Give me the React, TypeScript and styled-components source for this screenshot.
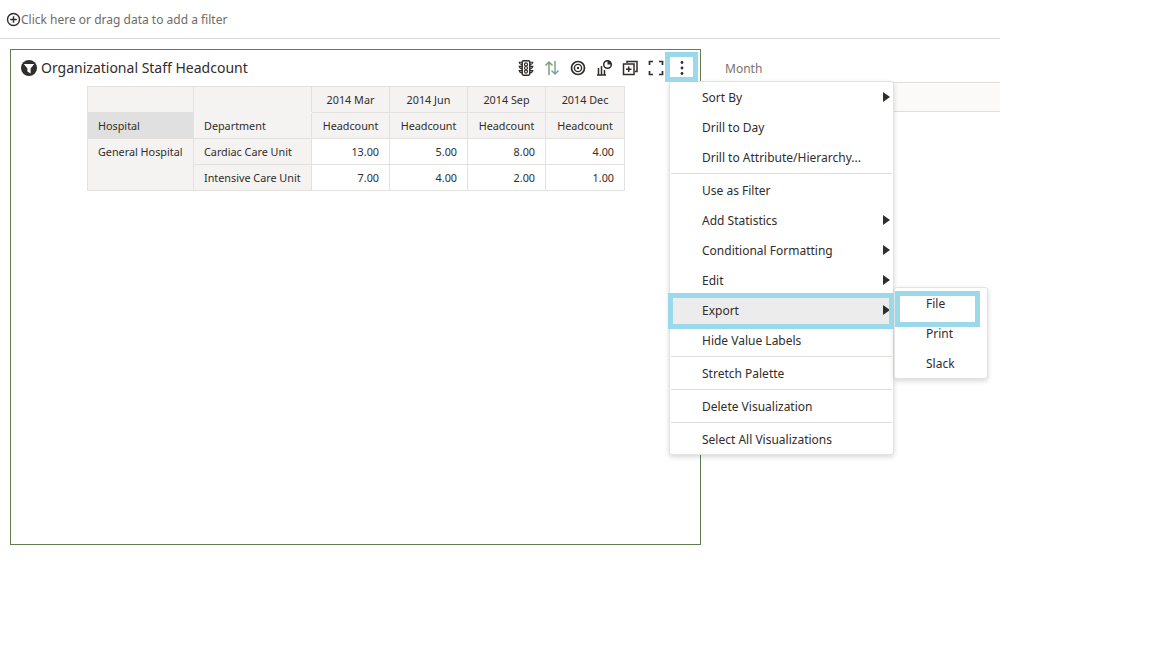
import React from 'react';
import styled, { createGlobalStyle } from 'styled-components';

const Global = createGlobalStyle`
  html, body { margin: 0; padding: 0; background: #fff; }
  body { font-family: "Noto Sans", "Open Sans", sans-serif; color: #312d2a; }
`;
const Page = styled.div`
  position: relative;
  width: 1152px;
  height: 648px;
  overflow: hidden;
`;
const Canvas = styled.div`
  width: 1000px;
`;
const FilterBar = styled.div`
  height: 38px;
  border-bottom: 1px solid #d6d5d1;
  display: flex;
  align-items: center;
  padding-left: 6px;
  font-size: 12px;
  color: #6f6b66;
`;
const Body = styled.div`
  display: flex;
  padding: 10px 0 0 10px;
`;
const Viz = styled.section`
  width: 691px;
  height: 496px;
  box-sizing: border-box;
  border: 1px solid #5f7d4f;
  flex: none;
`;
const VizHeader = styled.header`
  height: 36px;
  display: flex;
  align-items: center;
  padding-left: 10px;
  box-sizing: border-box;
`;
const Title = styled.h2`
  margin: -2px 0 0 4px;
  font-size: 14px;
  font-weight: 400;
  flex: 1;
`;
const Tools = styled.div`
  display: flex;
  padding-right: 5px;
`;
const Tool = styled.span`
  width: 26px;
  height: 26px;
  display: flex;
  align-items: center;
  justify-content: center;
`;
const Grid = styled.table`
  margin-left: 76px;
  border-collapse: collapse;
  table-layout: fixed;
  width: 537px;
  font-size: 10.8px;
  line-height: 24px;
  td, th { border: 1px solid #e2e1de; font-weight: 400; padding: 0 10px; height: 26px; box-sizing: border-box; white-space: nowrap; }
`;
const Head = styled.th<{ $active?: boolean; $left?: boolean; $open?: boolean }>`
  background: ${p => (p.$active ? '#dfe0df' : '#f4f3f2')};
  text-align: ${p => (p.$left ? 'left' : 'center')};
  && { border-bottom-color: ${p => (p.$open ? '#f4f3f2' : '#e2e1de')}; }
`;
const RowHead = styled.td<{ $top?: boolean }>`
  background: #f4f3f2;
  vertical-align: ${p => (p.$top ? 'top' : 'middle')};
  && { padding-top: ${p => (p.$top ? '1px' : '0')}; }
`;
const Value = styled.td`
  text-align: right;
`;
const Side = styled.aside`
  flex: 1;
`;
const SideLabel = styled.div`
  height: 33px;
  padding-left: 24px;
  display: flex;
  align-items: flex-end;
  padding-bottom: 5px;
  box-sizing: border-box;
  font-size: 12px;
  color: #7a736e;
`;
const SideBand = styled.div`
  height: 30px;
  box-sizing: border-box;
  background: #fbfaf9;
  border-top: 1px solid #dfdedb;
  border-bottom: 1px solid #dfdedb;
`;
const Menu = styled.div<{ $x: number; $y: number; $w: number; $h: number }>`
  position: absolute;
  left: ${p => p.$x}px;
  top: ${p => p.$y}px;
  width: ${p => p.$w}px;
  height: ${p => p.$h}px;
  box-sizing: border-box;
  background: #fff;
  border: 1px solid #e4e3e1;
  border-radius: 3px;
  box-shadow: 0 2px 5px rgba(0,0,0,.16);
`;
const Item = styled.div<{ $hover?: boolean }>`
  height: 30px;
  display: flex;
  align-items: center;
  justify-content: space-between;
  padding: 0 3px 0 32px;
  font-size: 12px;
  background: ${p => (p.$hover ? '#ececec' : 'transparent')};
`;
const SubItem = styled.div`
  height: 30px;
  display: flex;
  align-items: center;
  padding-left: 31px;
  font-size: 12px;
`;
const Sep = styled.div`
  height: 1px;
  margin: 1px 1px;
  background: #dfdedb;
`;
const Arrow = styled.span`
  width: 0;
  height: 0;
  border-left: 7px solid #312d2a;
  border-top: 5.5px solid transparent;
  border-bottom: 5.5px solid transparent;
`;
const Highlight = styled.div<{ $x: number; $y: number; $w: number; $h: number }>`
  position: absolute;
  left: ${p => p.$x}px;
  top: ${p => p.$y}px;
  width: ${p => p.$w}px;
  height: ${p => p.$h}px;
  box-sizing: border-box;
  border: 5px solid #9bd8ea;
  pointer-events: none;
`;

const I = ({ children, c = '#312d2a' }: { children: React.ReactNode; c?: string }) => (
  <svg width="18" height="18" viewBox="0 0 18 18" fill="none" stroke={c} strokeWidth="1.5">{children}</svg>
);

const icons = [
  <I key="a"><rect x="5.2" y="1.8" width="7.6" height="14.4" rx="1.4" strokeWidth="1.5" /><circle cx="9" cy="5.4" r="1.5" strokeWidth="1.2" /><circle cx="9" cy="9" r="1.5" strokeWidth="1.2" /><circle cx="9" cy="12.6" r="1.5" strokeWidth="1.2" /><path d="M5 3.2H2.2c.1 1.2.9 2 2.8 2.2M5 7.4H2.2c.1 1.2.9 2 2.8 2.2M5 11.6H2.2c.1 1.2.9 2 2.8 2.2M13 3.2h2.8c-.1 1.2-.9 2-2.8 2.2M13 7.4h2.8c-.1 1.2-.9 2-2.8 2.2M13 11.6h2.8c-.1 1.2-.9 2-2.8 2.2" strokeWidth="1.1" /></I>,
  <I key="b"><path d="M6 16V3M2.5 6.5 6 3l3.5 3.5" stroke="#7f9f6b" /><path d="M12 2v13M8.5 11.5 12 15l3.5-3.5" stroke="#79a3a0" /></I>,
  <I key="c"><circle cx="9" cy="9" r="6.5" strokeWidth="1.7" /><circle cx="9" cy="9" r="3.6" strokeWidth="1.4" /><circle cx="9" cy="9" r="1.2" fill="#312d2a" stroke="none" /></I>,
  <I key="d"><path d="M2 16h9M3.5 16V9M6.5 16V7M9.5 16v-5" /><circle cx="12.5" cy="5.5" r="3.8" /><path d="M12.5 5.5V1.7a3.8 3.8 0 0 1 3.8 3.8z" fill="#312d2a" stroke="none" /></I>,
  <I key="e"><path d="M6 4V2.5h10v10H14" /><rect x="2.5" y="5" width="10.5" height="10.5" /><path d="M7.7 7.5v5.5M5 10.2h5.5" /></I>,
  <I key="f"><path d="M2.5 6V2.5H6M12 2.5h3.5V6M15.5 12v3.5H12M6 15.5H2.5V12" strokeWidth="1.7" /></I>,
  <I key="g"><circle cx="9" cy="3.5" r="1.4" fill="#312d2a" stroke="none" /><circle cx="9" cy="9" r="1.4" fill="#312d2a" stroke="none" /><circle cx="9" cy="14.5" r="1.4" fill="#312d2a" stroke="none" /></I>,
];

const months = ['2014 Mar', '2014 Jun', '2014 Sep', '2014 Dec'];

export default function App() {
  return (
    <Page>
      <Global />
      <Canvas>
        <FilterBar>
          <svg width="15" height="15" viewBox="0 0 15 15" fill="none" stroke="#312d2a" strokeWidth="1.4">
            <circle cx="7.5" cy="7.5" r="6" />
            <path d="M7.5 4.2v6.6M4.2 7.5h6.6" />
          </svg>
          Click here or drag data to add a filter
        </FilterBar>
        <Body>
          <Viz>
            <VizHeader>
              <svg width="16" height="16" viewBox="0 0 16 16">
                <circle cx="8" cy="8" r="8" fill="#312d2a" />
                <path d="M2.8 4h10.4L9.6 8.4v5L6.4 11.6V8.4z" fill="#fff" />
              </svg>
              <Title>Organizational Staff Headcount</Title>
              <Tools>{icons.map((ic, i) => <Tool key={i}>{ic}</Tool>)}</Tools>
            </VizHeader>
            <Grid>
              <colgroup>
                <col style={{ width: 106 }} /><col style={{ width: 118 }} />
                <col style={{ width: 78 }} /><col style={{ width: 78 }} /><col style={{ width: 78 }} /><col style={{ width: 79 }} />
              </colgroup>
              <thead>
                <tr>
                  <Head />
                  <Head $open />
                  {months.map(m => <Head key={m}>{m}</Head>)}
                </tr>
                <tr>
                  <Head $active $left>Hospital</Head>
                  <Head $left>Department</Head>
                  {months.map(m => <Head key={m}>Headcount</Head>)}
                </tr>
              </thead>
              <tbody>
                <tr>
                  <RowHead rowSpan={2} $top>General Hospital</RowHead>
                  <RowHead>Cardiac Care Unit</RowHead>
                  <Value>13.00</Value><Value>5.00</Value><Value>8.00</Value><Value>4.00</Value>
                </tr>
                <tr>
                  <RowHead>Intensive Care Unit</RowHead>
                  <Value>7.00</Value><Value>4.00</Value><Value>2.00</Value><Value>1.00</Value>
                </tr>
              </tbody>
            </Grid>
          </Viz>
          <Side>
            <SideLabel>Month</SideLabel>
            <SideBand />
          </Side>
        </Body>
      </Canvas>

      <Menu $x={669} $y={81} $w={225} $h={374}>
        <Item>Sort By<Arrow /></Item>
        <Item>Drill to Day</Item>
        <Item>Drill to Attribute/Hierarchy...</Item>
        <Sep />
        <Item>Use as Filter</Item>
        <Item>Add Statistics<Arrow /></Item>
        <Item>Conditional Formatting<Arrow /></Item>
        <Item>Edit<Arrow /></Item>
        <Item $hover>Export<Arrow /></Item>
        <Item>Hide Value Labels</Item>
        <Sep />
        <Item>Stretch Palette</Item>
        <Sep />
        <Item>Delete Visualization</Item>
        <Sep />
        <Item>Select All Visualizations</Item>
      </Menu>
      <Menu $x={894} $y={287} $w={94} $h={92}>
        <SubItem>File</SubItem>
        <SubItem>Print</SubItem>
        <SubItem>Slack</SubItem>
      </Menu>
      <Highlight $x={665} $y={52} $w={33} $h={30} />
      <Highlight $x={668} $y={293} $w={226} $h={36} />
      <Highlight $x={895} $y={291} $w={85} $h={36} />
    </Page>
  );
}
